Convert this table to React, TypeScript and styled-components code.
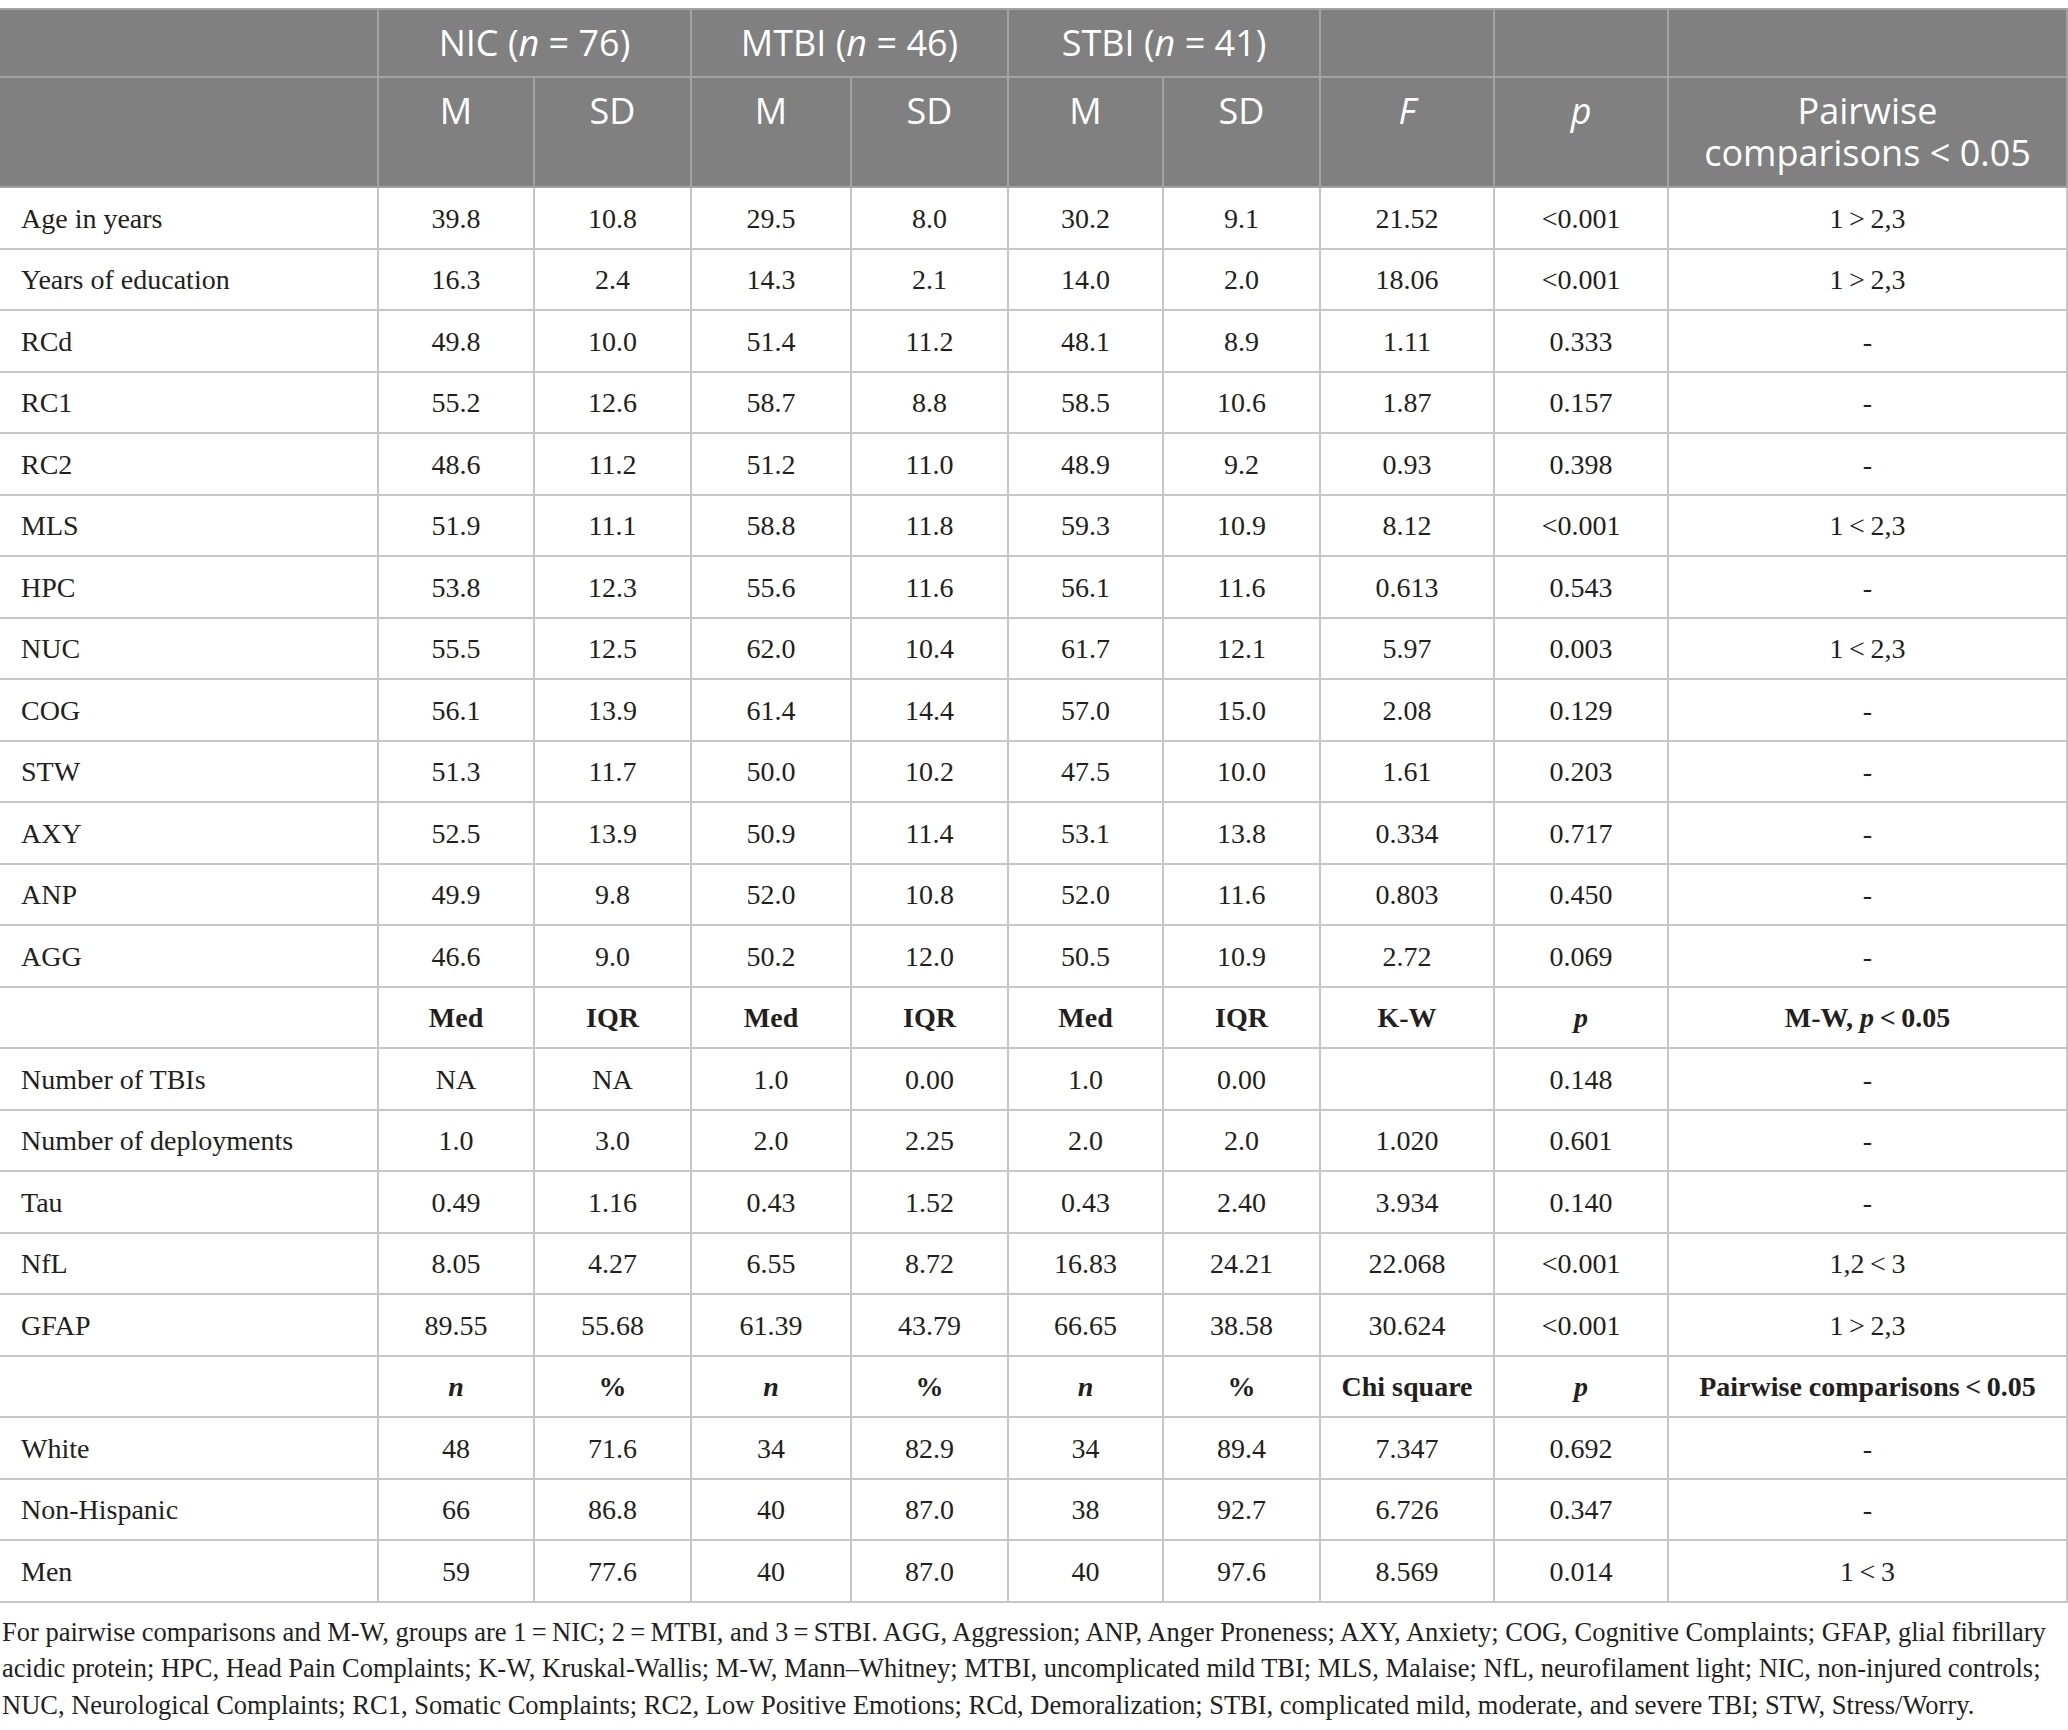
import React from "react";
import styled, { createGlobalStyle } from "styled-components";

const GlobalStyle = createGlobalStyle`
  html, body { margin: 0; padding: 0; background: #ffffff; }
  body { font-family: "Liberation Serif", "Times New Roman", serif; color: #231f20; }
`;

const Page = styled.div`
  width: 2068px;
  padding-top: 8px;
  box-sizing: border-box;
`;

const Table = styled.table`
  width: 2067px;
  border-collapse: collapse;
  table-layout: fixed;
  border-top: 2px solid #b4b4b4;
`;

const HeadRow = styled.tr<{ $h: number }>`
  height: ${(p) => p.$h}px;
  background: #808080;
`;

const HeadCell = styled.th<{ $italic?: boolean }>`
  font-family: "Open Sans", "Liberation Sans", sans-serif;
  font-weight: 400;
  font-size: 36px;
  line-height: 42px;
  color: #ffffff;
  text-align: center;
  vertical-align: top;
  padding: 12px 6px 12px;
  border: 2px solid #a2a2a2;
  font-style: ${(p) => (p.$italic ? "italic" : "normal")};
  &:first-child { border-left: none; }
`;

const HeadLine = styled.span`
  display: block;
  height: 42px;
  white-space: nowrap;
`;

const Row = styled.tr`
  height: 61.5px;
`;

const Cell = styled.td<{ $label?: boolean; $bold?: boolean }>`
  font-family: "Liberation Serif", "Times New Roman", serif;
  font-size: 28px;
  line-height: 32px;
  font-weight: ${(p) => (p.$bold ? 700 : 400)};
  text-align: ${(p) => (p.$label ? "left" : "center")};
  padding: 6px 4px 4px;
  padding-left: ${(p) => (p.$label ? "21px" : "4px")};
  vertical-align: middle;
  white-space: nowrap;
  border: 2px solid #c6c6c6;
  &:first-child { border-left: none; }
`;

const It = styled.i`
  font-style: italic;
`;

const Footnote = styled.div`
  margin-top: 11px;
  padding-left: 2px;
  font-family: "Liberation Serif", "Times New Roman", serif;
  font-size: 26.5px;
  line-height: 36.5px;
  color: #231f20;
`;

const FootLine = styled.div`
  white-space: nowrap;
`;

const T = "\u2009";

type Val = React.ReactNode;
const dataA: [string, ...Val[]][] = [
  ["Age in years", "39.8", "10.8", "29.5", "8.0", "30.2", "9.1", "21.52", "<0.001", `1${T}>${T}2,3`],
  ["Years of education", "16.3", "2.4", "14.3", "2.1", "14.0", "2.0", "18.06", "<0.001", `1${T}>${T}2,3`],
  ["RCd", "49.8", "10.0", "51.4", "11.2", "48.1", "8.9", "1.11", "0.333", "-"],
  ["RC1", "55.2", "12.6", "58.7", "8.8", "58.5", "10.6", "1.87", "0.157", "-"],
  ["RC2", "48.6", "11.2", "51.2", "11.0", "48.9", "9.2", "0.93", "0.398", "-"],
  ["MLS", "51.9", "11.1", "58.8", "11.8", "59.3", "10.9", "8.12", "<0.001", `1${T}<${T}2,3`],
  ["HPC", "53.8", "12.3", "55.6", "11.6", "56.1", "11.6", "0.613", "0.543", "-"],
  ["NUC", "55.5", "12.5", "62.0", "10.4", "61.7", "12.1", "5.97", "0.003", `1${T}<${T}2,3`],
  ["COG", "56.1", "13.9", "61.4", "14.4", "57.0", "15.0", "2.08", "0.129", "-"],
  ["STW", "51.3", "11.7", "50.0", "10.2", "47.5", "10.0", "1.61", "0.203", "-"],
  ["AXY", "52.5", "13.9", "50.9", "11.4", "53.1", "13.8", "0.334", "0.717", "-"],
  ["ANP", "49.9", "9.8", "52.0", "10.8", "52.0", "11.6", "0.803", "0.450", "-"],
  ["AGG", "46.6", "9.0", "50.2", "12.0", "50.5", "10.9", "2.72", "0.069", "-"],
];

const dataB: [string, ...Val[]][] = [
  ["Number of TBIs", "NA", "NA", "1.0", "0.00", "1.0", "0.00", "", "0.148", "-"],
  ["Number of deployments", "1.0", "3.0", "2.0", "2.25", "2.0", "2.0", "1.020", "0.601", "-"],
  ["Tau", "0.49", "1.16", "0.43", "1.52", "0.43", "2.40", "3.934", "0.140", "-"],
  ["NfL", "8.05", "4.27", "6.55", "8.72", "16.83", "24.21", "22.068", "<0.001", `1,2${T}<${T}3`],
  ["GFAP", "89.55", "55.68", "61.39", "43.79", "66.65", "38.58", "30.624", "<0.001", `1${T}>${T}2,3`],
];

const dataC: [string, ...Val[]][] = [
  ["White", "48", "71.6", "34", "82.9", "34", "89.4", "7.347", "0.692", "-"],
  ["Non-Hispanic", "66", "86.8", "40", "87.0", "38", "92.7", "6.726", "0.347", "-"],
  ["Men", "59", "77.6", "40", "87.0", "40", "97.6", "8.569", "0.014", `1${T}<${T}3`],
];

const colWidths = [378, 156, 157, 160, 157, 155, 157, 174, 174, 399];

function DataRow({ row }: { row: [string, ...Val[]] }) {
  const [label, ...vals] = row;
  return (
    <Row>
      <Cell $label>{label}</Cell>
      {vals.map((v, i) => (
        <Cell key={i}>{v}</Cell>
      ))}
    </Row>
  );
}

function SubHeadRow({ vals }: { vals: Val[] }) {
  return (
    <Row>
      <Cell $label $bold />
      {vals.map((v, i) => (
        <Cell key={i} $bold>
          {v}
        </Cell>
      ))}
    </Row>
  );
}

export default function App() {
  return (
    <Page>
      <GlobalStyle />
      <Table>
        <colgroup>
          {colWidths.map((w, i) => (
            <col key={i} style={{ width: w }} />
          ))}
        </colgroup>
        <thead>
          <HeadRow $h={68}>
            <HeadCell />
            <HeadCell colSpan={2}>
              NIC (<It>n</It> = 76)
            </HeadCell>
            <HeadCell colSpan={2}>
              MTBI (<It>n</It> = 46)
            </HeadCell>
            <HeadCell colSpan={2}>
              STBI (<It>n</It> = 41)
            </HeadCell>
            <HeadCell />
            <HeadCell />
            <HeadCell />
          </HeadRow>
          <HeadRow $h={110}>
            <HeadCell />
            <HeadCell>M</HeadCell>
            <HeadCell>SD</HeadCell>
            <HeadCell>M</HeadCell>
            <HeadCell>SD</HeadCell>
            <HeadCell>M</HeadCell>
            <HeadCell>SD</HeadCell>
            <HeadCell $italic>F</HeadCell>
            <HeadCell $italic>p</HeadCell>
            <HeadCell>
              <HeadLine>Pairwise</HeadLine>
              <HeadLine>comparisons{"\u00a0<\u00a0"}0.05</HeadLine>
            </HeadCell>
          </HeadRow>
        </thead>
        <tbody>
          {dataA.map((r) => (
            <DataRow key={r[0]} row={r} />
          ))}
          <SubHeadRow
            vals={[
              "Med",
              "IQR",
              "Med",
              "IQR",
              "Med",
              "IQR",
              "K-W",
              <It key="p">p</It>,
              <span key="mw">
                M-W, <It>p</It>
                {`${T}<${T}`}0.05
              </span>,
            ]}
          />
          {dataB.map((r) => (
            <DataRow key={r[0]} row={r} />
          ))}
          <SubHeadRow
            vals={[
              <It key="n1">n</It>,
              "%",
              <It key="n2">n</It>,
              "%",
              <It key="n3">n</It>,
              "%",
              "Chi square",
              <It key="p2">p</It>,
              `Pairwise comparisons${T}<${T}0.05`,
            ]}
          />
          {dataC.map((r) => (
            <DataRow key={r[0]} row={r} />
          ))}
        </tbody>
      </Table>
      <Footnote>
        <FootLine>
          For pairwise comparisons and M-W, groups are 1{T}={T}NIC; 2{T}={T}MTBI, and 3{T}={T}STBI. AGG, Aggression; ANP, Anger Proneness; AXY, Anxiety; COG, Cognitive Complaints; GFAP, glial fibrillary
        </FootLine>
        <FootLine>
          acidic protein; HPC, Head Pain Complaints; K-W, Kruskal-Wallis; M-W, Mann–Whitney; MTBI, uncomplicated mild TBI; MLS, Malaise; NfL, neurofilament light; NIC, non-injured controls;
        </FootLine>
        <FootLine>
          NUC, Neurological Complaints; RC1, Somatic Complaints; RC2, Low Positive Emotions; RCd, Demoralization; STBI, complicated mild, moderate, and severe TBI; STW, Stress/Worry.
        </FootLine>
      </Footnote>
    </Page>
  );
}
